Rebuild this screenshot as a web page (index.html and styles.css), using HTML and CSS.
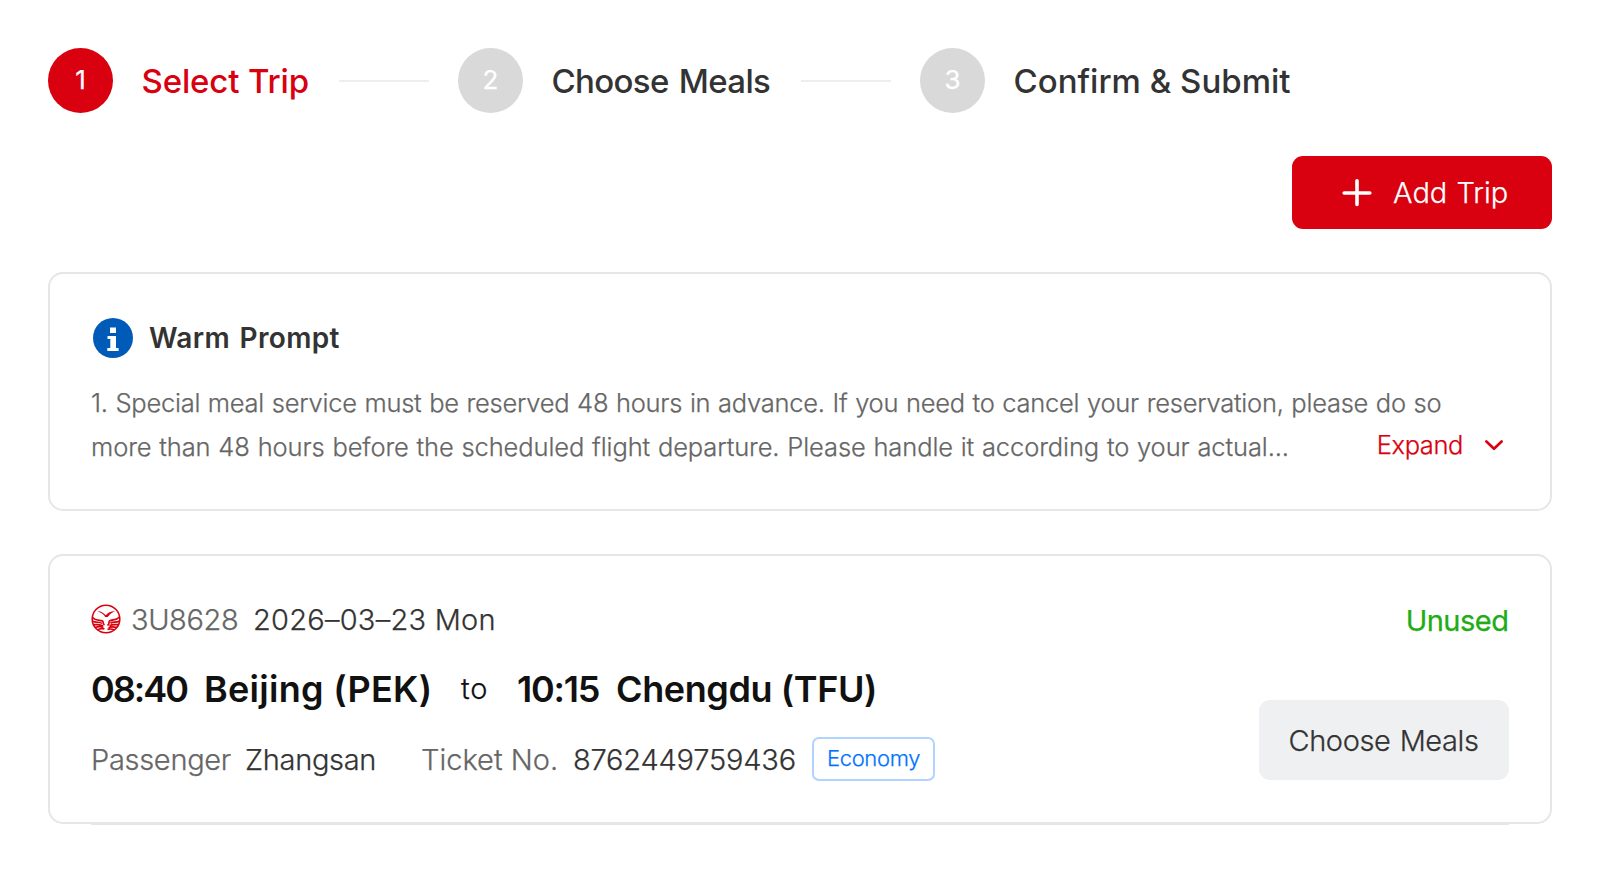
FILE: index.html
```html
<!DOCTYPE html>
<html lang="en">
<head>
  <meta charset="UTF-8">
  <meta name="viewport" content="width=device-width, initial-scale=1.0">
  <title>Select Trip</title>
  <link rel="stylesheet" href="styles.css">
</head>
<body>
  <!-- Steps -->
  <div class="steps">
    <div class="step active">
      <span class="step-num">1</span>
      <span class="step-label label-trip">Select Trip</span>
    </div>
    <span class="step-line"></span>
    <div class="step">
      <span class="step-num">2</span>
      <span class="step-label label-meals">Choose Meals</span>
    </div>
    <span class="step-line"></span>
    <div class="step">
      <span class="step-num">3</span>
      <span class="step-label">Confirm &amp; Submit</span>
    </div>
  </div>

  <!-- Toolbar -->
  <div class="toolbar">
    <button class="add-btn">
      <svg width="30" height="28" viewBox="0 0 30 28" fill="none" stroke="#fff" stroke-width="3.6" stroke-linecap="round">
        <path d="M2.2 14H27.8M15 1.8V25.4"/>
      </svg>
      <span>Add Trip</span>
    </button>
  </div>

  <!-- Warm Prompt -->
  <div class="card prompt">
    <div class="prompt-title">
      <svg width="40" height="40" viewBox="0 0 40 40">
        <circle cx="20" cy="20" r="20" fill="#005bb8"/>
        <path d="M17 9.5h6v5.5h-6zM14.5 18h8.5v12h2.6v3H14.3v-3h3v-9h-2.8z" fill="#fff"/>
      </svg>
      <h2>Warm Prompt</h2>
    </div>
    <div class="prompt-body">
      <p>
        <span class="line-one">1. Special meal service must be reserved 48 hours in advance. If you need to cancel your reservation, please do so</span><br>
        <span class="line-two">more than 48 hours before the scheduled flight departure. Please handle it according to your actual...</span>
      </p>
      <a class="expand" href="#">
        <span>Expand</span>
        <svg width="18" height="12" viewBox="0 0 18 12" fill="none" stroke="#d9000f" stroke-width="2.6" stroke-linecap="round" stroke-linejoin="round">
          <path d="M1.4 2.5L9 9.8L16.6 2.5"/>
        </svg>
      </a>
    </div>
  </div>

  <!-- Trip -->
  <div class="card trip">
    <div class="trip-info">
      <div class="flight">
        <svg class="airline" width="30" height="30" viewBox="0 0 30 30">
          <circle cx="15" cy="15" r="13.8" fill="#fff" stroke="#d9000f" stroke-width="1.6"/>
          <!-- bird -->
          <path d="M6.500 7.200C9.500 6.800 12.500 8.500 14.800 11.300C17 8.800 19.500 7.300 24 7C21 8.600 19.200 10 17.600 11.900C16.800 13 15.400 13.300 14.200 12.900C13.200 10.500 10.200 8.600 6.500 7.200z" fill="#d9000f"/>
          <!-- waves -->
          <g fill="none" stroke="#d9000f" stroke-width="1.7">
            <path d="M1.500 13.500C5 17.500 9 15.500 11.500 17C13 18 11 19.500 13.500 21M28.500 13C25 17 21 15 18.500 17C17 18.500 19.500 19.500 16.500 21.500"/>
            <path d="M1.500 17.300C5 19 9 17.500 11 19.500M28.500 17C25 19 22 17.500 19.500 19.200M2.500 20.800C6 20.500 9 19.800 12 22M27.500 20.500C24 21 21.500 20 18.500 21.800M4.200 23.600C7 22.300 9.500 22 12.500 23.500M26 23.500C23 22.800 20.500 22.300 17.500 23.700M6.500 26C8.500 24.600 11 24.200 13.500 25M23.500 26C21.500 25 19 24.700 16.500 25.400"/>
          </g>
        </svg>
        <span class="flight-no">3U8628</span>
        <span class="date">2026–03–23 Mon</span>
      </div>
      <div class="route">
        <span class="time-from">08:40</span>
        <span class="city-from">Beijing (PEK)</span>
        <span class="to">to</span>
        <span class="time-to">10:15</span>
        <span class="city-to">Chengdu (TFU)</span>
      </div>
      <div class="passenger">
        <span class="key key-name">Passenger</span>
        <span class="name">Zhangsan</span>
        <span class="key key-ticket">Ticket No.</span>
        <span class="ticket">8762449759436</span>
        <span class="tag">Economy</span>
      </div>
    </div>
    <div class="trip-side">
      <span class="status">Unused</span>
      <button class="meal-btn">Choose Meals</button>
    </div>
  </div>
  <div class="divider"></div>
</body>
</html>
```
FILE: styles.css
```css
* {
  box-sizing: border-box;
}
body {
  margin: 0;
  padding: 48px 48px 0;
  font-family: Inter, "Liberation Sans", sans-serif;
  font-weight: 300;
  -webkit-text-stroke-width: 0.25px;
  color: #333;
  background-color: #fff;
  white-space: nowrap;
}
svg {
  display: block;
  flex: none;
}
button {
  border: none;
  font-family: inherit;
  font-size: 29px;
  font-weight: inherit;
  cursor: pointer;
}

/* Steps */
.steps {
  display: flex;
  align-items: center;
  gap: 29px;
  height: 65px;
}
.step {
  display: flex;
  align-items: center;
  gap: 28.5px;
}
.step-num {
  width: 65px;
  height: 65px;
  border-radius: 50%;
  background-color: #d9d9d9;
  color: #fff;
  font-size: 26px;
  font-weight: 400;
  line-height: 64px;
  text-align: center;
}
.step-label {
  font-size: 33px;
  font-weight: 500;
  line-height: 40px;
  -webkit-text-stroke-width: 0;
}
.label-trip {
  width: 168.5px;
  letter-spacing: -0.15px;
}
.label-meals {
  width: 220.5px;
  letter-spacing: -0.65px;
  word-spacing: 2px;
}
.step.active .step-num {
  background-color: #d9000f;
}
.step.active .step-label {
  color: #d9000f;
}
.step-line {
  width: 90px;
  height: 2px;
  background-color: #eee;
}

/* Toolbar */
.toolbar {
  display: flex;
  justify-content: flex-end;
  margin-top: 43px;
}
.add-btn {
  display: flex;
  align-items: center;
  gap: 21px;
  width: 260px;
  height: 73px;
  padding: 0 0 0 50px;
  border-radius: 11px;
  background-color: #d9000f;
  color: #fff;
  word-spacing: 1px;
}

/* Cards */
.card {
  border: 2px solid #e6e6e6;
  border-radius: 15px;
  background-color: #fff;
}
.prompt {
  height: 239px;
  margin-top: 43px;
  padding: 43px 42px 0 41px;
}
.prompt-title {
  display: flex;
  align-items: center;
  gap: 16px;
  height: 41px;
  padding-left: 2px;
}
.prompt-title h2 {
  margin: 0;
  font-size: 28px;
  font-weight: 600;
  letter-spacing: 0.35px;
  word-spacing: 2px;
  -webkit-text-stroke-width: 0;
}
.prompt-body {
  display: flex;
  justify-content: space-between;
  align-items: flex-end;
  margin-top: 23px;
}
.prompt-body p {
  width: 1200px;
  margin: 0;
  font-size: 25.5px;
  line-height: 44px;
  color: #666;
}
.line-one {
  letter-spacing: -0.25px;
  word-spacing: 0.8px;
}
.line-two {
  letter-spacing: -0.11px;
  word-spacing: 0.8px;
}
.expand {
  display: flex;
  align-items: center;
  gap: 22px;
  padding-right: 5px;
  font-size: 25.5px;
  line-height: 48px;
  letter-spacing: -0.4px;
  color: #d9000f;
  text-decoration: none;
}

/* Trip */
.trip {
  display: flex;
  justify-content: space-between;
  height: 270px;
  margin-top: 43px;
  padding: 41px 41.5px 42px 41px;
}
.flight {
  display: flex;
  align-items: center;
  height: 44px;
  font-size: 29px;
}
.flight-no {
  width: 122px;
  margin-left: 10px;
  letter-spacing: -0.4px;
  color: #666;
}
.date {
  letter-spacing: 0.25px;
}
.route {
  display: flex;
  align-items: center;
  margin-top: 26px;
  font-size: 36px;
  font-weight: 600;
  line-height: 44px;
  color: #111;
  -webkit-text-stroke-width: 0;
}
.time-from {
  width: 113px;
  letter-spacing: -2px;
}
.city-from {
  width: 257px;
  letter-spacing: 0.3px;
}
.to {
  width: 56px;
  font-size: 29px;
  font-weight: 300;
  letter-spacing: 0.8px;
  -webkit-text-stroke-width: 0.25px;
}
.time-to {
  width: 99px;
  letter-spacing: -1.2px;
}
.city-to {
  letter-spacing: -0.4px;
}
.passenger {
  display: flex;
  align-items: center;
  height: 44px;
  margin-top: 26px;
  font-size: 29px;
}
.key {
  color: #666;
}
.key-name {
  width: 154px;
  letter-spacing: -0.3px;
}
.name {
  width: 176px;
  letter-spacing: -0.3px;
}
.key-ticket {
  width: 152px;
}
.ticket {
  width: 239px;
  letter-spacing: -0.2px;
}
.tag {
  width: 123px;
  height: 44px;
  border: 2px solid #b0d3ff;
  border-radius: 7px;
  font-size: 22px;
  line-height: 39px;
  letter-spacing: -0.35px;
  text-align: center;
  color: #0073ff;
}
.trip-side {
  display: flex;
  flex-direction: column;
  justify-content: space-between;
  align-items: flex-end;
}
.status {
  font-size: 29px;
  font-weight: 400;
  line-height: 47px;
  letter-spacing: -0.5px;
  color: #20ad14;
}
.meal-btn {
  width: 250px;
  height: 80px;
  border-radius: 11px;
  background-color: #eff0f2;
  color: #333;
  letter-spacing: -0.4px;
  word-spacing: 1.5px;
}
.divider {
  height: 2px;
  margin: -1px 43px 0;
  background-color: #e6e6e6;
}
```
